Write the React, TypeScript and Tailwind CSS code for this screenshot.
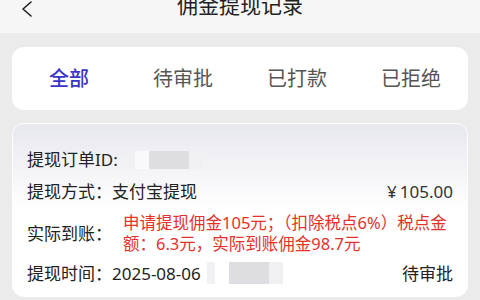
import React from 'react';

const tabs = ['全部', '待审批', '已打款', '已拒绝'];

const Blur: React.FC<{ className?: string }> = ({ className }) => (
  <span className={`inline-flex h-[18px] ${className ?? ''}`}>
    <span className="w-[8px] bg-[#f1f1f3]" />
    <span className="w-[14px] bg-white/60" />
    <span className="w-[40px] bg-[#dedee2]" />
    <span className="w-[14px] bg-[#f0f0f2]" />
  </span>
);

export default function App() {
  return (
    <div
      className="w-[480px] h-[300px] overflow-hidden bg-[#ebebeb] text-[#222]"
      style={{ fontFamily: '"Noto Sans", "Noto Sans CJK SC", sans-serif' }}
    >
      {/* Header */}
      <div className="relative h-[33px] bg-[#f6f6f6] overflow-hidden">
        <svg className="absolute left-[20px] top-[1px]" width="14" height="16" viewBox="0 0 14 16" fill="none">
          <path d="M11 1 L3 8 L11 15" stroke="#222" strokeWidth="1.6" strokeLinecap="round" strokeLinejoin="round" />
        </svg>
        <div className="mt-[-9px] text-center text-[21px] leading-[28px] text-[#222]">佣金提现记录</div>
      </div>

      <div className="px-[12px] pt-[14px]">
        {/* Tabs */}
        <div className="grid h-[63px] grid-cols-4 items-center rounded-[12px] bg-white">
          {tabs.map((t, i) => (
            <div
              key={t}
              className={`text-center text-[20px] ${i === 0 ? 'font-medium text-[#3b34c6]' : 'text-[#555]'}`}
            >
              {t}
            </div>
          ))}
        </div>

        {/* Record card */}
        <div className="mt-[13px] h-[174px] rounded-[12px] border border-white bg-gradient-to-b from-[#e7e7ef] via-white to-white px-[14px] pt-[25px] text-[17px] leading-[21px]">
          <div className="flex items-center">
            <span>提现订单ID:</span>
            <Blur className="ml-[9px]" />
          </div>
          <div className="mt-[11px] flex items-center justify-between">
            <span>提现方式：支付宝提现</span>
            <span className="text-[#333]">
              <span className="mr-[3px]">¥</span>105.00
            </span>
          </div>
          <div className="mt-[10px] flex items-center">
            <span className="w-[96px] shrink-0">实际到账：</span>
            <span className="text-[16.5px] text-[#e4312b]">申请提现佣金105元；（扣除税点6%）税点金额：6.3元，实际到账佣金98.7元</span>
          </div>
          <div className="mt-[8px] flex items-center">
            <span>提现时间：2025-08-06</span>
            <Blur className="ml-[6px] h-[22px]" />
            <span className="ml-auto">待审批</span>
          </div>
        </div>
      </div>
    </div>
  );
}
